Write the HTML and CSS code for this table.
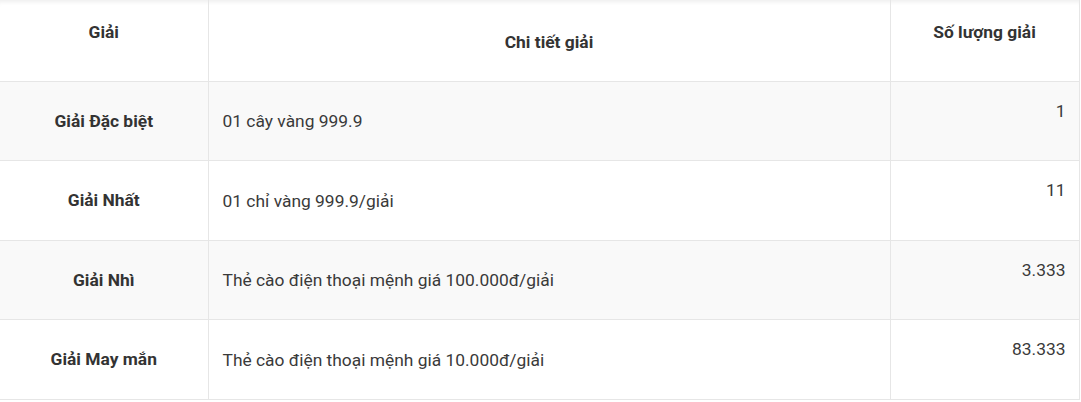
FILE: index.html
```html
<!DOCTYPE html>
<html lang="vi">
<head>
<meta charset="utf-8">
<title>Giải thưởng</title>
<link rel="stylesheet" href="styles.css">
</head>
<body>
<div class="wrap">
  <table class="prizes">
    <colgroup>
      <col class="c1">
      <col class="c2">
      <col class="c3">
    </colgroup>
    <thead>
      <tr class="head">
        <th class="top">Giải</th>
        <th class="mid">Chi tiết giải</th>
        <th class="top">Số lượng giải</th>
      </tr>
    </thead>
    <tbody>
      <tr class="odd r79">
        <td class="name">Giải Đặc biệt</td>
        <td class="detail">01 cây vàng 999.9</td>
        <td class="qty">1</td>
      </tr>
      <tr class="r80">
        <td class="name">Giải Nhất</td>
        <td class="detail">01 chỉ vàng 999.9/giải</td>
        <td class="qty">11</td>
      </tr>
      <tr class="odd r79">
        <td class="name">Giải Nhì</td>
        <td class="detail">Thẻ cào điện thoại mệnh giá 100.000đ/giải</td>
        <td class="qty">3.333</td>
      </tr>
      <tr class="r80">
        <td class="name">Giải May mắn</td>
        <td class="detail">Thẻ cào điện thoại mệnh giá 10.000đ/giải</td>
        <td class="qty">83.333</td>
      </tr>
    </tbody>
  </table>
</div>
</body>
</html>
```

FILE: styles.css
```css
html, body {
  margin: 0;
  padding: 0;
  background: #fff;
}
body {
  font-family: Roboto, "Liberation Sans", Arial, sans-serif;
  font-size: 17.4px;
  color: #333;
}
.wrap {
  width: 1079px;
  box-shadow: inset 0 5px 4px -3px rgba(0, 0, 0, 0.07);
}
.prizes {
  width: 1079px;
  border-collapse: collapse;
  table-layout: fixed;
}
.c1 { width: 208px; }
.c2 { width: 682px; }
.c3 { width: 189px; }

.prizes th,
.prizes td {
  border: 1px solid #e6e6e6;
  line-height: 24px;
  padding: 0 14px;
}
.prizes tr > :first-child { border-left: none; }
.prizes thead th { border-top: none; }

.head { height: 81px; }
.r79 { height: 79px; }
.r80 { height: 80px; }
.odd { background: #f9f9f9; }

.prizes th {
  font-weight: 700;
  text-align: center;
  color: #333;
}
.prizes th.top {
  vertical-align: top;
  padding-top: 20px;
}
.prizes th.mid {
  vertical-align: middle;
  padding-top: 3px;
}
.prizes .name {
  font-weight: 700;
  text-align: center;
  vertical-align: middle;
}
.prizes .detail {
  text-align: left;
  vertical-align: middle;
  padding-top: 1px;
  color: #3a3a3a;
}
.prizes .qty {
  text-align: right;
  vertical-align: top;
  padding-top: 17px;
  padding-right: 13px;
  color: #3a3a3a;
}
```
